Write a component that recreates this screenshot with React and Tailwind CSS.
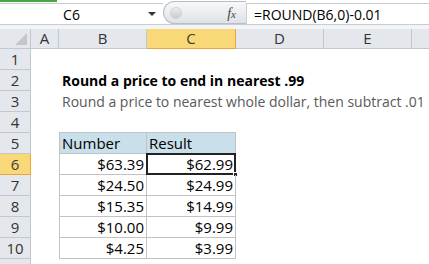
import React from "react";

const cols = [
  { key: "A", w: "w-[28px]" },
  { key: "B", w: "w-[88px]" },
  { key: "C", w: "w-[89px]" },
  { key: "D", w: "w-[88px]" },
  { key: "E", w: "w-[88px]" },
  { key: "F", w: "w-[40px]" },
];

const data = [
  ["$63.39", "$62.99"],
  ["$24.50", "$24.99"],
  ["$15.35", "$14.99"],
  ["$10.00", "$9.99"],
  ["$4.25", "$3.99"],
];

function RowHead({ n, active }) {
  return (
    <div
      className={
        "w-[31px] shrink-0 h-full flex items-center justify-center border-r border-b text-[15px] " +
        (active ? "bg-[#f9d977] border-[#e8a73c] text-[#3b3b3b]" : "bg-[#e4e7eb] border-[#c3c8ce] text-[#333]")
      }
    >
      {n}
    </div>
  );
}

function Row({ n, active, children }) {
  return (
    <div className="flex h-[21px]">
      <RowHead n={n} active={active} />
      {children}
    </div>
  );
}

export default function App() {
  return (
    <div className="w-[429px] h-[264px] overflow-hidden bg-white text-black" style={{ fontFamily: "'Open Sans', 'Liberation Sans', sans-serif" }}>
      {/* formula bar */}
      <div className="relative h-[29px] bg-[#f3f4f6]">
        <div className="absolute left-0 top-0 w-[57px] h-[2px] bg-[#4aa64a]" />
        <div className="flex h-[25px] pt-[3px] border-b border-[#c9ccd1] bg-white">
          <div className="relative w-[163px] flex items-center justify-center text-[14px] border-t border-[#c9ccd1]">
            <span className="-ml-[20px]">C6</span>
            <span className="absolute right-[7px] top-[8px] w-0 h-0 border-x-[4px] border-x-transparent border-t-[4px] border-t-[#333]" />
          </div>
          <div className="relative w-[83px] bg-gradient-to-b from-[#f7f8f9] to-[#dfe2e6] rounded-l-full border border-[#b9bec4] border-r-0 -mt-[2px]">
            <span className="absolute left-[6px] top-[5px] w-[12px] h-[12px] rounded-full bg-gradient-to-b from-[#e9ebee] to-[#c9cdd2] border border-[#cfd3d8]" />
            <span className="absolute right-[10px] top-[1px] text-[14px] italic text-[#444]" style={{ fontFamily: "'Liberation Serif', serif" }}>
              f<span className="text-[11px]">x</span>
            </span>
          </div>
          <div className="flex-1 flex items-center pl-[7px] text-[14px] border-l border-t border-[#c9ccd1]">=ROUND(B6,0)-0.01</div>
        </div>
      </div>

      {/* column headers */}
      <div className="flex h-[20px] text-[15px]">
        <div className="relative w-[31px] shrink-0 bg-[#e4e7eb] border-r border-b border-[#c3c8ce]">
          <span className="absolute right-[3px] bottom-[3px] w-0 h-0 border-l-[12px] border-l-transparent border-b-[12px] border-b-[#c3c7cc]" />
        </div>
        {cols.map((c) => (
          <div
            key={c.key}
            className={
              c.w +
              " shrink-0 flex items-center justify-center border-r border-b " +
              (c.key === "C" ? "bg-[#f9d977] border-[#e8a73c] text-[#3b3b3b]" : "bg-[#e4e7eb] border-[#c3c8ce] text-[#333]")
            }
          >
            {c.key !== "F" && c.key}
          </div>
        ))}
      </div>

      {/* rows */}
      <div className="text-[15px]">
        <Row n={1} />
        <Row n={2}>
          <div className="pl-[31px] flex items-center font-bold text-[14px] whitespace-nowrap">Round a price to end in nearest .99</div>
        </Row>
        <Row n={3}>
          <div className="pl-[31px] flex items-center text-[14px] text-[#595959] whitespace-nowrap">Round a price to nearest whole dollar, then subtract .01</div>
        </Row>
        <Row n={4} />
        <Row n={5}>
          <div className="w-[28px] shrink-0" />
          <div className="w-[88px] shrink-0 flex items-center pl-[2px] bg-[#c9dfe9] border-t border-l border-r border-b border-[#bfc3c7] -mt-px h-[22px]">Number</div>
          <div className="w-[89px] shrink-0 flex items-center pl-[2px] bg-[#c9dfe9] border-t border-r border-b border-[#bfc3c7] -mt-px h-[22px]">Result</div>
        </Row>
        {data.map((d, i) => (
          <Row key={i} n={6 + i} active={i === 0}>
            <div className="w-[28px] shrink-0" />
            <div className="w-[88px] shrink-0 flex items-center justify-end pr-[2px] border-l border-r border-b border-[#bfc3c7]">{d[0]}</div>
            <div className="relative w-[89px] shrink-0 flex items-center justify-end pr-[2px] border-r border-b border-[#bfc3c7]">
              {d[1]}
              {i === 0 && (
                <>
                  <span className="absolute -left-px -top-px -right-px -bottom-px border-2 border-[#222]" />
                  <span className="absolute -right-[3px] -bottom-[3px] w-[5px] h-[5px] bg-[#222] border border-white" />
                </>
              )}
            </div>
          </Row>
        ))}
        <Row n="" />
      </div>
    </div>
  );
}
